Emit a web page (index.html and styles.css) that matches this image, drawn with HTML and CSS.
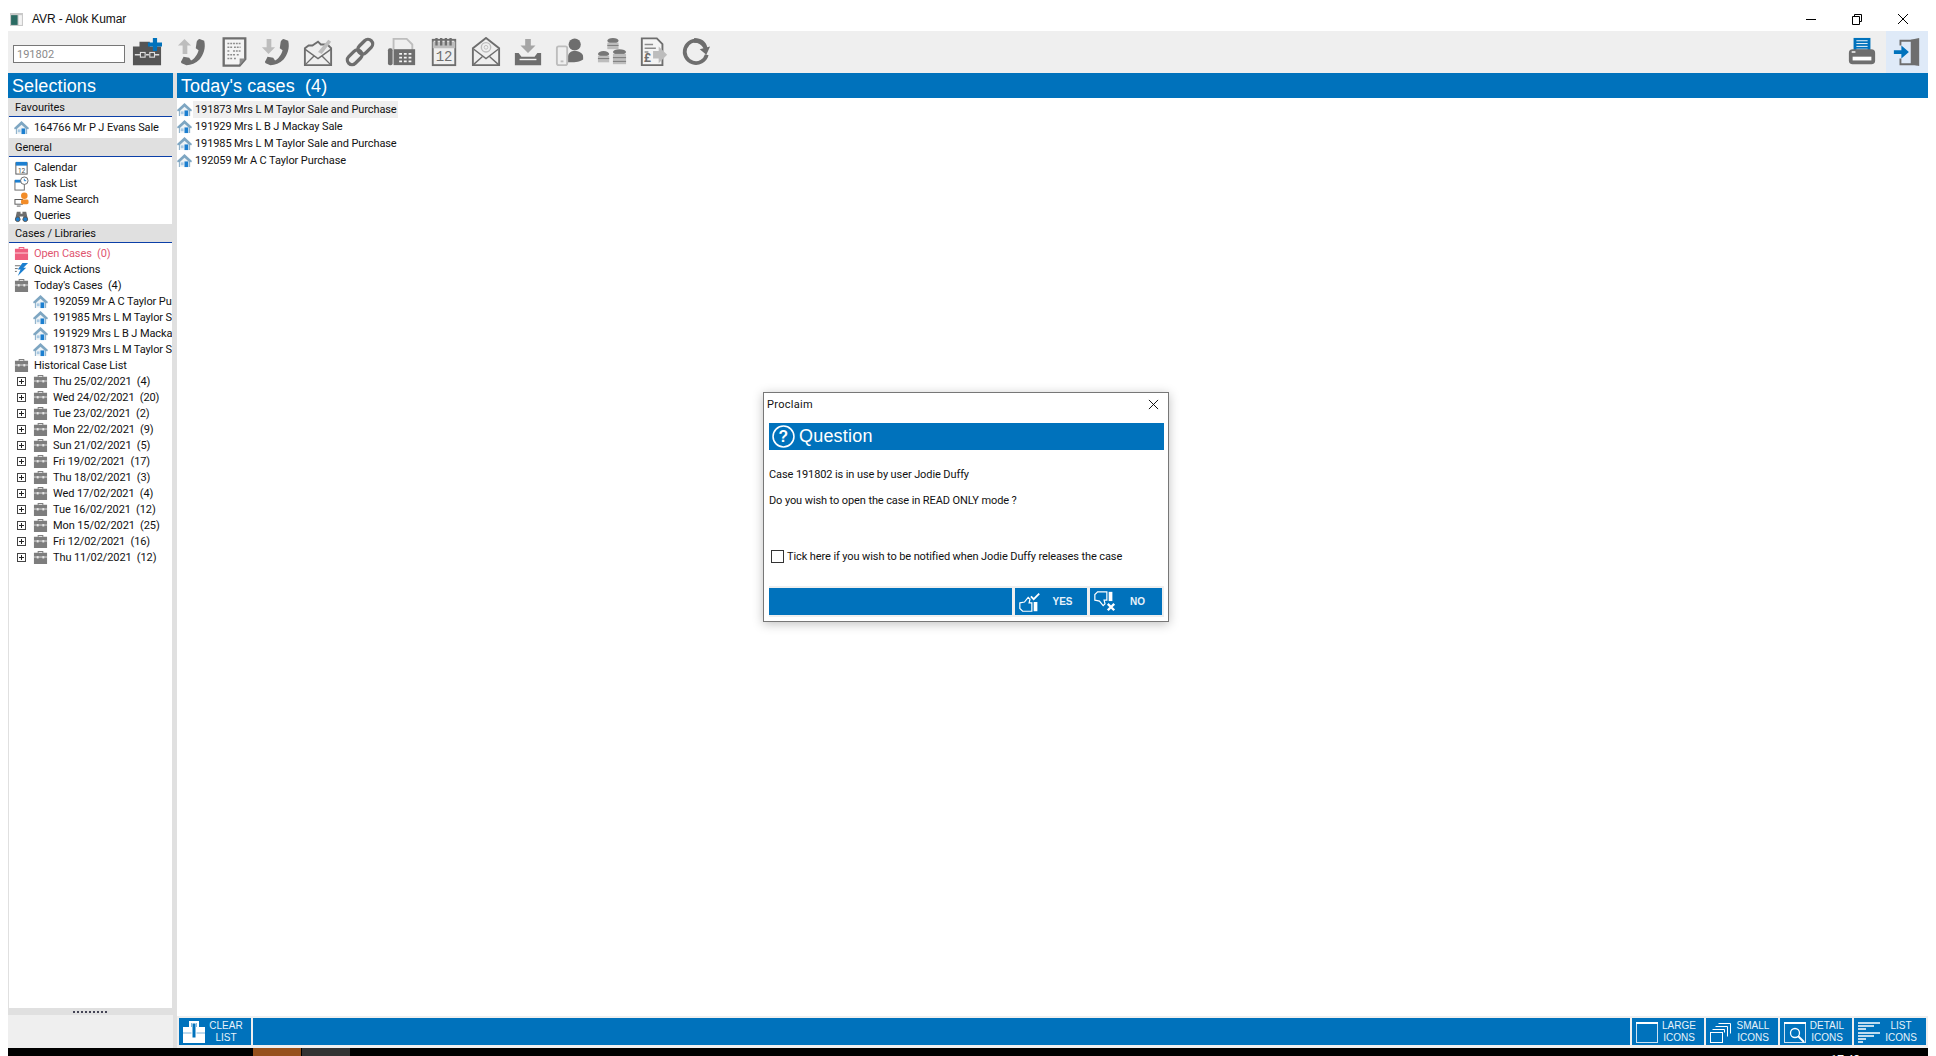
FILE: index.html
```html
<!DOCTYPE html>
<html lang="en">
<head>
    <meta charset="UTF-8">
    <title>AVR - Alok Kumar</title>
    <link rel="stylesheet" href="styles.css">
</head>
<body>
    <svg class="defs" width="0" height="0">
        <symbol id="house" viewBox="0 0 16 16">
            <path d="M0 8.500 8 1l8 7.500-1 1.500-1-.8V15H2V9.200L1 10z" fill="#7ea6c2"/>
            <path d="M3 9.500 8 5l5 4.500V15H3z" fill="#eef3f6"/>
            <rect x="8" y="9" width="4" height="6" fill="#1c7fd0"/>
            <rect x="4" y="10" width="3" height="3" fill="#a9c9e2"/>
        </symbol>
        <symbol id="case" viewBox="0 0 16 16">
            <path d="M5 3V1h6v2h4v12H1V3zm1 0h4V2H6z" fill="#7d7d7d"/>
            <rect x="1" y="7" width="14" height="1" fill="#dcdcdc"/>
            <rect x="4" y="6.500" width="2" height="2.500" fill="#e8e8e8"/>
            <rect x="10" y="6.500" width="2" height="2.500" fill="#e8e8e8"/>
        </symbol>
        <symbol id="handset" viewBox="0 0 32 32">
            <path d="M24 2l5 2c2 8-1 15-5 20-4 4-9 6-14 6l-5-2c-1-1-1-2 0-3l2-4 6 1 2 3c4-2 7-7 8-11l-3-2 1-7c1-2 2-3 3-3z" fill="#6e6e6e"/>
        </symbol>
    </svg>

    <div class="titlebar">
        <svg class="app-icon" viewBox="0 0 12 12"><rect width="12" height="12" fill="#c9c9c9"/><rect x="1" y="2" width="6" height="9" fill="#2b6b63"/><rect x="8" y="2" width="3" height="9" fill="#f3f3f3"/></svg>
        <span class="app-title">AVR - Alok Kumar</span>
        <div class="win-controls">
            <svg viewBox="0 0 46 12"><path d="M18 6.500h10" stroke="#000" fill="none"/></svg>
            <svg viewBox="0 0 46 12"><path d="M18.500 3.500h7v8h-7zM20.500 3.500v-2h7v7h-2" stroke="#000" fill="none"/></svg>
            <svg viewBox="0 0 46 12"><path d="M18 1l10 10M28 1 18 11" stroke="#000" fill="none"/></svg>
        </div>
    </div>

    <div class="toolbar">
        <input class="case-input" type="text" value="191802">
        <div class="tool first"><svg viewBox="0 0 32 32"><path d="M1 10h7V5h11v5h12v20H1z" fill="#555"/><path d="M3 19h6m6 0h3m6 0h5" stroke="#ddd" stroke-width="1.500"/><rect x="9" y="16.500" width="5" height="5" fill="none" stroke="#ddd" stroke-width="1.200"/><rect x="19" y="16.500" width="5" height="5" fill="none" stroke="#ddd" stroke-width="1.200"/><path d="M17 8h15M24.500 1v14" stroke="#0072bc" stroke-width="4.500"/></svg></div>
        <div class="tool"><svg viewBox="0 0 32 32"><use href="#handset"/><path d="M8 2l7 7h-4v9H6V9H1z" fill="#bdbdbd"/></svg></div>
        <div class="tool"><svg viewBox="0 0 32 32"><path d="M5 1.500h23v22l-6 7H5z" fill="#f4f4f4" stroke="#6e6e6e" stroke-width="2.500"/><path d="M9 7h14M9 11h5m2 0h7M9 15h3m3 0h8M9 19h8m2 0h3M9 23h5m2 0h3" stroke="#8c8c8c" stroke-dasharray="2 1" stroke-width="1.500"/><path d="M28 23h-6v7z" fill="#8c8c8c"/></svg></div>
        <div class="tool"><svg viewBox="0 0 32 32"><use href="#handset"/><path d="M8 18l7-7h-4V2H6v9H1z" fill="#bdbdbd"/></svg></div>
        <div class="tool"><svg viewBox="0 0 32 32"><path d="M2 12l4-3h4l6-4 3 3h7l4 4v18H2z" fill="none" stroke="#6e6e6e" stroke-width="2"/><path d="M2 13l14 10 14-10M2 30l10-10M30 30 20 20" fill="none" stroke="#6e6e6e" stroke-width="1.500"/><path d="M16 16 27 3l3 2-10 13z" fill="#bdbdbd"/></svg></div>
        <div class="tool"><svg viewBox="0 0 32 32"><g transform="rotate(-45 16 16)" fill="none" stroke-width="3.500"><rect x="-1" y="11" width="18" height="10" rx="5" stroke="#6e6e6e"/><rect x="15" y="11" width="18" height="10" rx="5" stroke="#6e6e6e"/></g></svg></div>
        <div class="tool"><svg viewBox="0 0 32 32"><path d="M7 13V2h14l6 6v6" fill="none" stroke="#bdbdbd" stroke-width="2"/><rect x="1" y="12" width="5" height="18" rx="2" fill="#6e6e6e"/><path d="M7 13h23v17H7z" fill="#6e6e6e"/><path d="M13 17h3v2h-3zm5 0h3v2h-3zm5 0h3v2h-3zM13 21h3v2h-3zm5 0h3v2h-3zm5 0h3v2h-3zM13 25h3v2h-3zm5 0h3v2h-3zm5 0h3v2h-3z" fill="#f4f4f4"/></svg></div>
        <div class="tool"><svg viewBox="0 0 32 32"><rect x="4" y="3" width="24" height="27" fill="none" stroke="#6e6e6e" stroke-width="2"/><rect x="4" y="5" width="24" height="7" fill="#bdbdbd"/><path d="M8 1v8m5-8v8m5-8v8m5-8v8" stroke="#6e6e6e" stroke-width="2.500"/><text x="16" y="26" class="cal-num">12</text></svg></div>
        <div class="tool"><svg viewBox="0 0 32 32"><path d="M2 12 16 1l14 11v18H2z" fill="none" stroke="#6e6e6e" stroke-width="2"/><path d="M2 30l10-9M30 30l-10-9M3 13l13 10 13-10" fill="none" stroke="#6e6e6e" stroke-width="1.500"/><circle cx="16" cy="11" r="5" fill="none" stroke="#bdbdbd" stroke-width="1.500"/><circle cx="16" cy="11" r="2" fill="none" stroke="#bdbdbd"/></svg></div>
        <div class="tool"><svg viewBox="0 0 32 32"><path d="M13 2h6v7h5l-8 8-8-8h5z" fill="#a5a5a5"/><path d="M2 17h4l3 4h14l3-4h4v13H2z" fill="#6e6e6e"/><path d="M7 24h18" stroke="#f4f4f4" stroke-width="1.500"/></svg></div>
        <div class="tool"><svg viewBox="0 0 32 32"><rect x="2" y="10" width="11" height="20" rx="2" fill="none" stroke="#bdbdbd" stroke-width="2"/><path d="M6 26h3" stroke="#bdbdbd" stroke-width="2"/><circle cx="21" cy="8" r="6.500" fill="#6e6e6e"/><path d="M14 27v-6c0-4 3-6 7-6s9 2 9 6v3c-5 3-10 3-16 3z" fill="#6e6e6e"/></svg></div>
        <div class="tool"><svg viewBox="0 0 32 32"><ellipse cx="17" cy="4" rx="6" ry="3" fill="#777"/><rect x="11" y="6" width="12" height="7" fill="#bdbdbd"/><ellipse cx="7" cy="18" rx="6" ry="3" fill="#777"/><rect x="1" y="20" width="12" height="7" fill="#bdbdbd"/><ellipse cx="24" cy="16" rx="7" ry="3" fill="#777"/><rect x="17" y="18" width="14" height="11" fill="#bdbdbd"/><path d="M17 22h14m-14 4h14M1 23h12M11 9h12" stroke="#777"/></svg></div>
        <div class="tool"><svg viewBox="0 0 32 32"><path d="M3 1.500h16l6 6V30H3z" fill="#f4f4f4" stroke="#6e6e6e" stroke-width="2"/><path d="M6 8h9M6 12h12M6 16h4" stroke="#8c8c8c" stroke-width="1.500"/><text x="5" y="27" class="pound">£</text><path d="M15 15h6V10l9 9-9 9v-5h-6z" fill="#bdbdbd"/></svg></div>
        <div class="tool"><svg viewBox="0 0 32 32"><path d="M20 4.500A12 12 0 1 0 27.500 19" fill="none" stroke="#6e6e6e" stroke-width="4"/><path d="M14 1c8 0 13 4 14 10l3-1-4 9-7-6 4-1c-2-4-5-6-10-6z" fill="#6e6e6e"/></svg></div>
        <div class="tool-right">
            <div class="tool"><svg viewBox="0 0 32 32"><rect x="7" y="1" width="18" height="15" fill="#0072bc"/><path d="M10 4h12M10 7h12M10 10h12M10 13h12" stroke="#fff"/><rect x="2" y="13" width="28" height="16" rx="4" fill="#6e6e6e"/><rect x="6" y="21" width="20" height="4" fill="#fff"/><rect x="5" y="15" width="4" height="2" fill="#ddd"/></svg></div>
            <div class="tool exit"><svg viewBox="0 0 32 32"><path d="M9 9V4h17v25H9v-6" fill="none" stroke="#6e6e6e" stroke-width="2"/><path d="M20 3l9-2v30l-9-2z" fill="#6e6e6e"/><path d="M2 14h8V9l8 7-8 7v-5H2z" fill="#0072bc"/></svg></div>
        </div>
    </div>

    <div class="workspace">
        <div class="selections">
            <div class="pane-title">Selections</div>
            <div class="tree">
                <div class="section">Favourites</div>
                <div class="row fav"><svg class="ico"><use href="#house"/></svg><span>164766 Mr P J Evans Sale</span></div>
                <div class="section">General</div>
                <div class="group">
                    <div class="row"><svg class="ico" viewBox="0 0 16 16"><rect x="2" y="3" width="12" height="12" fill="#fff" stroke="#555"/><rect x="2" y="2" width="12" height="4" fill="#1c7fd0"/><text x="8" y="14" class="ico-num">12</text></svg><span>Calendar</span></div>
                    <div class="row"><svg class="ico" viewBox="0 0 16 16"><rect x="1" y="5" width="10" height="10" fill="#fff" stroke="#666"/><rect x="1" y="4" width="10" height="3" fill="#1c7fd0"/><circle cx="11" cy="5" r="4" fill="#fff" stroke="#666"/><path d="M11 3v2h2" stroke="#1c7fd0" fill="none"/></svg><span>Task List</span></div>
                    <div class="row"><svg class="ico" viewBox="0 0 16 16"><rect x="1" y="8" width="8" height="5" fill="#fff" stroke="#555"/><path d="M3 15h4" stroke="#555"/><circle cx="11" cy="4" r="3.500" fill="#f28c28"/><rect x="7.500" y="8" width="8" height="5" rx="1.500" fill="#f28c28"/></svg><span>Name Search</span></div>
                    <div class="row"><svg class="ico" viewBox="0 0 16 16"><path d="M3 4h4v2h2V4h4l2 9h-5V9H6v4H1z" fill="#6e6e6e"/><circle cx="4" cy="12" r="2.500" fill="#1c7fd0" stroke="#555"/><circle cx="12" cy="12" r="2.500" fill="#1c7fd0" stroke="#555"/></svg><span>Queries</span></div>
                </div>
                <div class="section">Cases / Libraries</div>
                <div class="group">
                    <div class="row open"><svg class="ico" viewBox="0 0 16 16"><path d="M5 3V1h6v2h4v12H1V3zm1 0h4V2H6z" fill="#ef5f7f"/><rect x="1" y="7" width="14" height="1" fill="#ffd9e0"/></svg><span>Open Cases&nbsp; (0)</span></div>
                    <div class="row"><svg class="ico" viewBox="0 0 16 16"><path d="M9 1h6L10 6h3L4 15l3-7H4z" fill="#1c7fd0"/><path d="M1 4h6M1 7h3M1 10h2" stroke="#666"/></svg><span>Quick Actions</span></div>
                    <div class="row"><svg class="ico"><use href="#case"/></svg><span>Today's Cases&nbsp; (4)</span></div>
                    <div class="row child"><svg class="ico"><use href="#house"/></svg><span>192059 Mr A C Taylor Purchase</span></div>
                    <div class="row child"><svg class="ico"><use href="#house"/></svg><span>191985 Mrs L M Taylor Sale and Purchase</span></div>
                    <div class="row child"><svg class="ico"><use href="#house"/></svg><span>191929 Mrs L B J Mackay Sale</span></div>
                    <div class="row child"><svg class="ico"><use href="#house"/></svg><span>191873 Mrs L M Taylor Sale and Purchase</span></div>
                    <div class="row"><svg class="ico"><use href="#case"/></svg><span>Historical Case List</span></div>
                    <div class="row day"><i class="plus"></i><svg class="ico"><use href="#case"/></svg><span>Thu 25/02/2021&nbsp; (4)</span></div>
                    <div class="row day"><i class="plus"></i><svg class="ico"><use href="#case"/></svg><span>Wed 24/02/2021&nbsp; (20)</span></div>
                    <div class="row day"><i class="plus"></i><svg class="ico"><use href="#case"/></svg><span>Tue 23/02/2021&nbsp; (2)</span></div>
                    <div class="row day"><i class="plus"></i><svg class="ico"><use href="#case"/></svg><span>Mon 22/02/2021&nbsp; (9)</span></div>
                    <div class="row day"><i class="plus"></i><svg class="ico"><use href="#case"/></svg><span>Sun 21/02/2021&nbsp; (5)</span></div>
                    <div class="row day"><i class="plus"></i><svg class="ico"><use href="#case"/></svg><span>Fri 19/02/2021&nbsp; (17)</span></div>
                    <div class="row day"><i class="plus"></i><svg class="ico"><use href="#case"/></svg><span>Thu 18/02/2021&nbsp; (3)</span></div>
                    <div class="row day"><i class="plus"></i><svg class="ico"><use href="#case"/></svg><span>Wed 17/02/2021&nbsp; (4)</span></div>
                    <div class="row day"><i class="plus"></i><svg class="ico"><use href="#case"/></svg><span>Tue 16/02/2021&nbsp; (12)</span></div>
                    <div class="row day"><i class="plus"></i><svg class="ico"><use href="#case"/></svg><span>Mon 15/02/2021&nbsp; (25)</span></div>
                    <div class="row day"><i class="plus"></i><svg class="ico"><use href="#case"/></svg><span>Fri 12/02/2021&nbsp; (16)</span></div>
                    <div class="row day"><i class="plus"></i><svg class="ico"><use href="#case"/></svg><span>Thu 11/02/2021&nbsp; (12)</span></div>
                </div>
            </div>
            <div class="splitter"><i></i></div>
            <div class="pane-foot"></div>
        </div>

        <div class="cases">
            <div class="pane-title">Today's cases&nbsp; (4)</div>
            <div class="case-list">
                <div class="case-row current"><svg class="ico"><use href="#house"/></svg><span>191873 Mrs L M Taylor Sale and Purchase</span></div>
                <div class="case-row"><svg class="ico"><use href="#house"/></svg><span>191929 Mrs L B J Mackay Sale</span></div>
                <div class="case-row"><svg class="ico"><use href="#house"/></svg><span>191985 Mrs L M Taylor Sale and Purchase</span></div>
                <div class="case-row"><svg class="ico"><use href="#house"/></svg><span>192059 Mr A C Taylor Purchase</span></div>
            </div>
            <div class="actions">
                <div class="action"><svg viewBox="0 0 24 24"><path d="M1 7h22v16H1z" fill="#fff"/><path d="M8 7V2h8v5" fill="none" stroke="#fff" stroke-width="2"/><path d="M1 13h22" stroke="#7fb4db"/><rect x="10" y="3" width="4" height="15" fill="#0072bc" stroke="#fff"/></svg><span>CLEAR<br>LIST</span></div>
                <div class="action-fill"></div>
                <div class="action"><svg viewBox="0 0 24 24"><rect x="1.500" y="2.500" width="21" height="20" fill="none" stroke="#cfe3f2"/><path d="M1 3h22" stroke="#fff" stroke-width="2"/></svg><span>LARGE<br>ICONS</span></div>
                <div class="action"><svg viewBox="0 0 24 24"><g fill="none" stroke="#fff"><path d="M9.500 3.500h12v10"/><path d="M6.500 6.500h12v10"/><rect x="1.500" y="12.500" width="12" height="10"/><path d="M3.500 9.500h12v3"/></g></svg><span>SMALL<br>ICONS</span></div>
                <div class="action"><svg viewBox="0 0 24 24"><rect x="1.500" y="2.500" width="21" height="20" fill="none" stroke="#cfe3f2"/><path d="M1 3h22" stroke="#fff" stroke-width="2"/><circle cx="12" cy="13" r="4.500" fill="none" stroke="#fff" stroke-width="1.300"/><path d="M15 16l6 6" stroke="#fff" stroke-width="2"/></svg><span>DETAIL<br>ICONS</span></div>
                <div class="action"><svg viewBox="0 0 24 24"><path d="M1 3h22M1 6h16M1 9h8M1 13h22M1 16h16M1 19h8M1 22h5" stroke="#fff" stroke-width="1.300"/></svg><span>LIST<br>ICONS</span></div>
            </div>
        </div>
    </div>

    <div class="taskbar">
        <div class="task-orange"></div>
        <div class="task-dark"></div>
        <div class="clock">17:48</div>
    </div>

    <div class="dialog">
        <div class="dialog-head">
            <span>Proclaim</span>
            <svg viewBox="0 0 12 12"><path d="M1 1l10 10M11 1 1 11" stroke="#000" fill="none"/></svg>
        </div>
        <div class="dialog-bar">
            <svg viewBox="0 0 22 22"><circle cx="11" cy="11" r="10" fill="none" stroke="#fff" stroke-width="1.500"/><text x="11" y="16.500" class="q-mark">?</text></svg>
            <span>Question</span>
        </div>
        <p class="msg first">Case 191802 is in use by user Jodie Duffy</p>
        <p class="msg">Do you wish to open the case in READ ONLY mode ?</p>
        <label class="tick"><i class="box"></i><span>Tick here if you wish to be notified when Jodie Duffy releases the case</span></label>
        <div class="dialog-foot">
            <div class="foot-fill"></div>
            <div class="answer"><svg viewBox="0 0 26 24"><path d="M2 13l5-1 4-5 2 2-1 4h3v9H5l-3-3z" fill="none" stroke="#fff" stroke-width="1.300"/><rect x="17" y="12" width="4" height="10" fill="#fff"/><path d="M14 6l3 3 6-6" fill="none" stroke="#fff" stroke-width="2"/></svg><span>YES</span></div>
            <div class="answer"><svg viewBox="0 0 26 24"><path d="M2 10l5 1 4 5 2-2-1-4h3V1H5L2 4z" fill="none" stroke="#fff" stroke-width="1.300"/><rect x="17" y="1" width="4" height="10" fill="#fff"/><path d="M16 14l7 7m0-7-7 7" stroke="#fff" stroke-width="2.500"/></svg><span>NO</span></div>
        </div>
    </div>
</body>
</html>
```

FILE: styles.css
```css
html, body {
    margin: 0;
    padding: 0;
    height: 1056px;
    overflow: hidden;
    background: #fff;
}
body {
    font-family: Roboto, "Liberation Sans", sans-serif;
    font-size: 11px;
    letter-spacing: -.1px;
    color: #111;
    display: flex;
    flex-direction: column;
}
.defs {
    position: absolute;
}
.titlebar {
    height: 24px;
    padding-top: 7px;
    display: flex;
    align-items: center;
    padding-left: 10px;
}
.app-icon {
    width: 13px;
    height: 13px;
    margin-right: 9px;
}
.app-title {
    font-family: "Liberation Sans", sans-serif;
    font-size: 12px;
}
.win-controls {
    margin-left: auto;
    margin-right: 10px;
    margin-top: -1px;
    display: flex;
}
.win-controls svg {
    width: 46px;
    height: 12px;
}
.toolbar {
    margin: 0 8px;
    height: 42px;
    background: #efefef;
    display: flex;
    align-items: center;
    padding-left: 5px;
}
.case-input {
    width: 112px;
    height: 18px;
    box-sizing: border-box;
    border: 1px solid #777;
    padding: 0 3px;
    margin-top: 4px;
    margin-right: 1px;
    font-family: inherit;
    font-size: 11px;
    color: #8a8a8a;
}
.tool {
    width: 42px;
    height: 42px;
    display: flex;
    align-items: center;
    justify-content: center;
}
.tool svg {
    width: 30px;
    height: 30px;
}
.tool.first {
    margin-right: 3px;
}
.tool-right {
    margin-left: auto;
    display: flex;
}
.exit {
    background: #dfeaf8;
    margin-left: 3px;
}
.cal-num {
    font-family: "Liberation Mono", monospace;
    font-size: 15px;
    fill: #6e6e6e;
    text-anchor: middle;
}
.pound {
    font-size: 13px;
    font-weight: bold;
    fill: #6e6e6e;
}
.workspace {
    flex: 1;
    min-height: 0;
    margin: 0 8px;
    display: flex;
    background: #e0e0e0;
}
.selections {
    width: 165px;
    display: flex;
    flex-direction: column;
}
.pane-title {
    height: 24px;
    line-height: 25px;
    padding-top: 1px;
    background: #0072bc;
    color: #fff;
    font-family: "Liberation Sans", sans-serif;
    font-size: 18px;
    letter-spacing: .1px;
    padding-left: 4px;
    flex: none;
}
.tree {
    flex: 1;
    min-height: 0;
    background: #fff;
    margin-left: 1px;
    margin-right: 1px;
    overflow: hidden;
}
.section {
    height: 18px;
    line-height: 19px;
    background: #e0e0e0;
    border-bottom: 1px solid #0b3fa8;
    padding-left: 6px;
}
.group {
    padding: 2px 0 1px;
}
.row {
    height: 16px;
    display: flex;
    align-items: center;
    padding-left: 5px;
    white-space: nowrap;
    overflow: hidden;
}
.row .ico {
    margin-right: 5px;
}
.row.fav {
    height: 21px;
}
.row.open {
    color: #e0556f;
}
.row.child {
    padding-left: 24px;
}
.ico {
    width: 15px;
    height: 15px;
    flex: none;
}
.ico-num {
    font-size: 7px;
    fill: #444;
    text-anchor: middle;
}
.plus {
    width: 9px;
    height: 9px;
    box-sizing: border-box;
    border: 1px solid #444;
    flex: none;
    margin-left: 3px;
    margin-right: 7px;
    background: linear-gradient(#222, #222) center / 5px 1px no-repeat, linear-gradient(#222, #222) center / 1px 5px no-repeat;
}
.splitter {
    height: 7px;
    background: #e0e0e0;
    flex: none;
    display: flex;
    justify-content: center;
    align-items: center;
}
.splitter i {
    width: 36px;
    height: 2px;
    background: repeating-linear-gradient(90deg, #445 0 2px, transparent 2px 4px);
}
.pane-foot {
    height: 33px;
    background: #efefef;
    flex: none;
}
.cases {
    flex: 1;
    margin-left: 4px;
    display: flex;
    flex-direction: column;
    min-width: 0;
}
.case-list {
    flex: 1;
    background: #fff;
    padding-top: 3px;
}
.case-row {
    height: 17px;
    display: flex;
    align-items: center;
}
.case-row span {
    padding: 0 1px 0 2px;
    line-height: 17px;
    margin-left: 1px;
}
.case-row.current span {
    background: #efefef;
}
.actions {
    height: 27px;
    flex: none;
    padding: 2px 2px 3px;
    background: #efefef;
    display: flex;
    gap: 2px;
}
.action {
    width: 72px;
    background: #0072bc;
    color: #e8f2fa;
    display: flex;
    align-items: center;
    justify-content: space-between;
    padding: 0 5px 0 3px;
    box-sizing: border-box;
    font-family: "Liberation Sans", sans-serif;
    font-size: 10px;
    letter-spacing: 0;
    line-height: 12px;
    text-align: center;
}
.action svg {
    width: 24px;
    height: 24px;
    flex: none;
}
.action span {
    flex: 1;
}
.action-fill {
    flex: 1;
    background: #0072bc;
}
.taskbar {
    height: 8px;
    margin: 0 8px;
    background: #000;
    display: flex;
    overflow: hidden;
    flex: none;
}
.task-orange {
    width: 48px;
    margin-left: 245px;
    background: #96501c;
}
.task-dark {
    width: 48px;
    margin-left: 1px;
    background: #333;
}
.clock {
    margin-left: auto;
    margin-right: 68px;
    padding-top: 5px;
    color: #fff;
    font-size: 12px;
}
.dialog {
    position: absolute;
    left: 763px;
    top: 392px;
    width: 406px;
    height: 230px;
    box-sizing: border-box;
    border: 1px solid #777;
    background: #fff;
    box-shadow: 0 2px 10px rgba(0, 0, 0, .25);
    padding: 0 4px 0 5px;
}
.dialog-head {
    height: 23px;
    padding-bottom: 7px;
    display: flex;
    align-items: center;
    justify-content: space-between;
    padding-right: 5px;
    margin-left: -2px;
    letter-spacing: .3px;
}
.dialog-head svg {
    width: 11px;
    height: 11px;
}
.dialog-bar {
    height: 27px;
    background: #0072bc;
    color: #fff;
    font-family: "Liberation Sans", sans-serif;
    font-size: 18px;
    letter-spacing: .2px;
    display: flex;
    align-items: center;
    padding-left: 3px;
}
.dialog-bar svg {
    width: 23px;
    height: 23px;
    margin-right: 4px;
}
.q-mark {
    font-size: 15px;
    font-weight: bold;
    fill: #fff;
    text-anchor: middle;
}
.msg {
    margin: 0;
    height: 26px;
    line-height: 16px;
}
.msg.first {
    margin-top: 17px;
}
.tick {
    display: flex;
    align-items: center;
    height: 16px;
    margin-top: 29px;
    padding-left: 2px;
}
.box {
    width: 13px;
    height: 13px;
    box-sizing: border-box;
    border: 1px solid #333;
    margin-right: 3px;
}
.dialog-foot {
    margin-top: 22px;
    background: #efefef;
    padding: 2px;
    padding-left: 0;
    display: flex;
    gap: 3px;
}
.foot-fill {
    flex: 1;
    height: 27px;
    background: #0072bc;
}
.answer {
    width: 72px;
    height: 27px;
    background: #0072bc;
    color: #e8f2fa;
    font-family: "Liberation Sans", sans-serif;
    font-size: 10px;
    font-weight: bold;
    letter-spacing: 0;
    display: flex;
    align-items: center;
    padding: 0 4px 0 3px;
    box-sizing: border-box;
}
.answer svg {
    width: 24px;
    height: 24px;
    flex: none;
}
.answer span {
    flex: 1;
    text-align: center;
}
```
